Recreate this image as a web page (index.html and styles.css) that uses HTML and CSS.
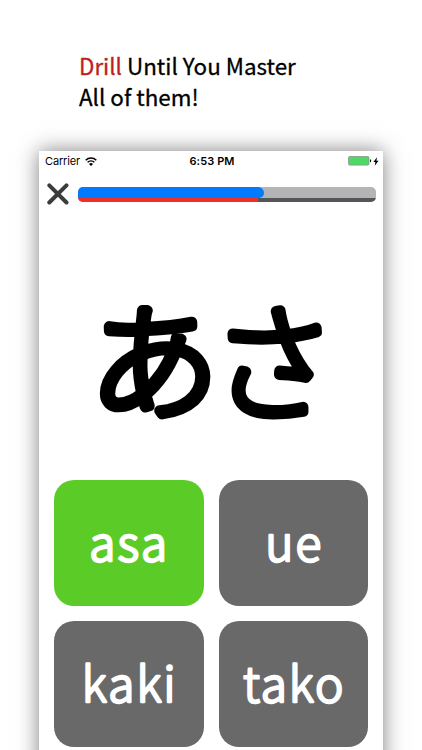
FILE: index.html
```html
<!DOCTYPE html>
<html lang="en">
<head>
    <meta charset="utf-8">
    <title>Kana Drill</title>
    <link rel="stylesheet" href="styles.css">
</head>
<body>
<h1 class="headline"><span class="accent">Drill</span> Until You Master<br>All of them!</h1>

<div class="phone">
    <div class="status-bar">
        <div class="carrier">
            <span>Carrier</span>
            <svg class="wifi" viewBox="0 0 12 9">
                <path d="M.7 3.2a7.6 7.6 0 0 1 10.6 0M2.6 5.3a4.9 4.9 0 0 1 6.8 0" fill="none" stroke="#000" stroke-width="1.5"/>
                <path d="M6 9 4 6.9a2.9 2.9 0 0 1 4 0z"/>
            </svg>
        </div>
        <div class="time">6:53 PM</div>
        <div class="power">
            <svg class="battery" viewBox="0 0 24 10">
                <rect x=".5" y=".5" width="20.5" height="8.6" rx="1.3" fill="#4cd964" stroke="#8c948d" stroke-width=".8"/>
                <path d="M22 3.2q1.2.4 1.2 1.6T22 6.4z"/>
            </svg>
            <svg class="bolt" viewBox="0 0 6 9">
                <path d="M4 .3.4 5h2L1.7 8.7 5.6 3.8H3.4z"/>
            </svg>
        </div>
    </div>

    <div class="toolbar">
        <svg class="close" viewBox="0 0 22 22">
            <path d="M2.3 2.3l17.2 17.2M19.5 2.3L2.3 19.5" stroke="#3c3c3c" stroke-width="4" stroke-linecap="round"/>
        </svg>
        <div class="progress">
            <div class="time-left"></div>
            <div class="score"></div>
        </div>
    </div>

    <svg class="question" lang="ja" viewBox="0 0 344 252">
        <text transform="translate(49.7 193) scale(1.056 1.02)">あ</text>
        <text transform="translate(172.3 194.7) scale(1 1.035)">さ</text>
    </svg>

    <div class="answers">
        <button class="answer correct"><svg viewBox="0 0 150 126"><text x="75.5" y="81">asa</text></svg></button>
        <button class="answer"><svg viewBox="0 0 150 126"><text x="75.5" y="81">ue</text></svg></button>
        <button class="answer"><svg viewBox="0 0 150 126"><text x="76" y="81">kaki</text></svg></button>
        <button class="answer"><svg viewBox="0 0 150 126"><text x="75.5" y="81">tako</text></svg></button>
    </div>
</div>
</body>
</html>
```
FILE: styles.css
```css
body {
    width: 422px;
    height: 750px;
    margin: 0;
    overflow: hidden;
    background: #fff;
    color: #000;
    font-family: "Noto Sans CJK JP", sans-serif;
}
.headline {
    box-sizing: border-box;
    height: 151px;
    margin: 0;
    padding: 50px 0 0 79px;
    font-size: 22.4px;
    font-weight: 400;
    line-height: 31px;
    -webkit-text-stroke: 0.3px;
}
.accent {
    color: #bd1e22;
}

/* Phone */
.phone {
    width: 344px;
    height: 620px;
    margin-left: 39px;
    background: #fff;
    box-shadow: 0 0 20px rgba(0, 0, 0, 0.5);
}
.status-bar {
    display: grid;
    grid-template-columns: 1fr auto 1fr;
    align-items: center;
    height: 20px;
    padding: 0 4px 0 6px;
    font-family: Inter, sans-serif;
    font-size: 11px;
}
.carrier {
    display: flex;
    align-items: center;
    gap: 5px;
    letter-spacing: -0.15px;
}
.wifi {
    width: 12px;
    height: 9px;
}
.time {
    font-weight: 600;
    letter-spacing: 0.1px;
}
.power {
    display: flex;
    align-items: center;
    justify-content: flex-end;
    gap: 1px;
}
.battery {
    width: 24px;
    height: 10px;
}
.bolt {
    width: 6px;
    height: 9px;
}

/* Close button and progress */
.toolbar {
    display: flex;
    align-items: center;
    gap: 9px;
    height: 45px;
    padding: 0 7.5px 0 8px;
}
.close {
    width: 22px;
    height: 22px;
}
.progress {
    flex: 1;
    height: 15px;
    margin-top: 1px;
    border-radius: 5px;
    background: linear-gradient(#b3b4b6 11px, #555557 11px);
    overflow: hidden;
}
.time-left {
    width: 186px;
    height: 11px;
    border-radius: 0 6px 5px 0;
    background: #007aff;
}
.score {
    width: 180px;
    height: 4px;
    background: #ee2f25;
}

.question {
    display: block;
    width: 344px;
    height: 252px;
    font-size: 124px;
    font-weight: 100;
    stroke: #000;
    stroke-width: 10.5px;
    stroke-linejoin: round;
}

/* Answers */
.answers {
    display: grid;
    grid-template-columns: 1fr 1fr;
    grid-auto-rows: 126px;
    gap: 15px;
    padding: 12px 15px;
}
.answer {
    padding: 0;
    border: none;
    border-radius: 20px;
    background: #696969;
    font-family: inherit;
    font-size: 48px;
    font-weight: 300;
    letter-spacing: 2px;
}
.answer svg {
    display: block;
    width: 100%;
    height: 126px;
    fill: #fff;
    stroke: #fff;
    stroke-width: 2.4px;
    stroke-linejoin: round;
    text-anchor: middle;
}
.answer.correct {
    background: #5bcb27;
}
```
